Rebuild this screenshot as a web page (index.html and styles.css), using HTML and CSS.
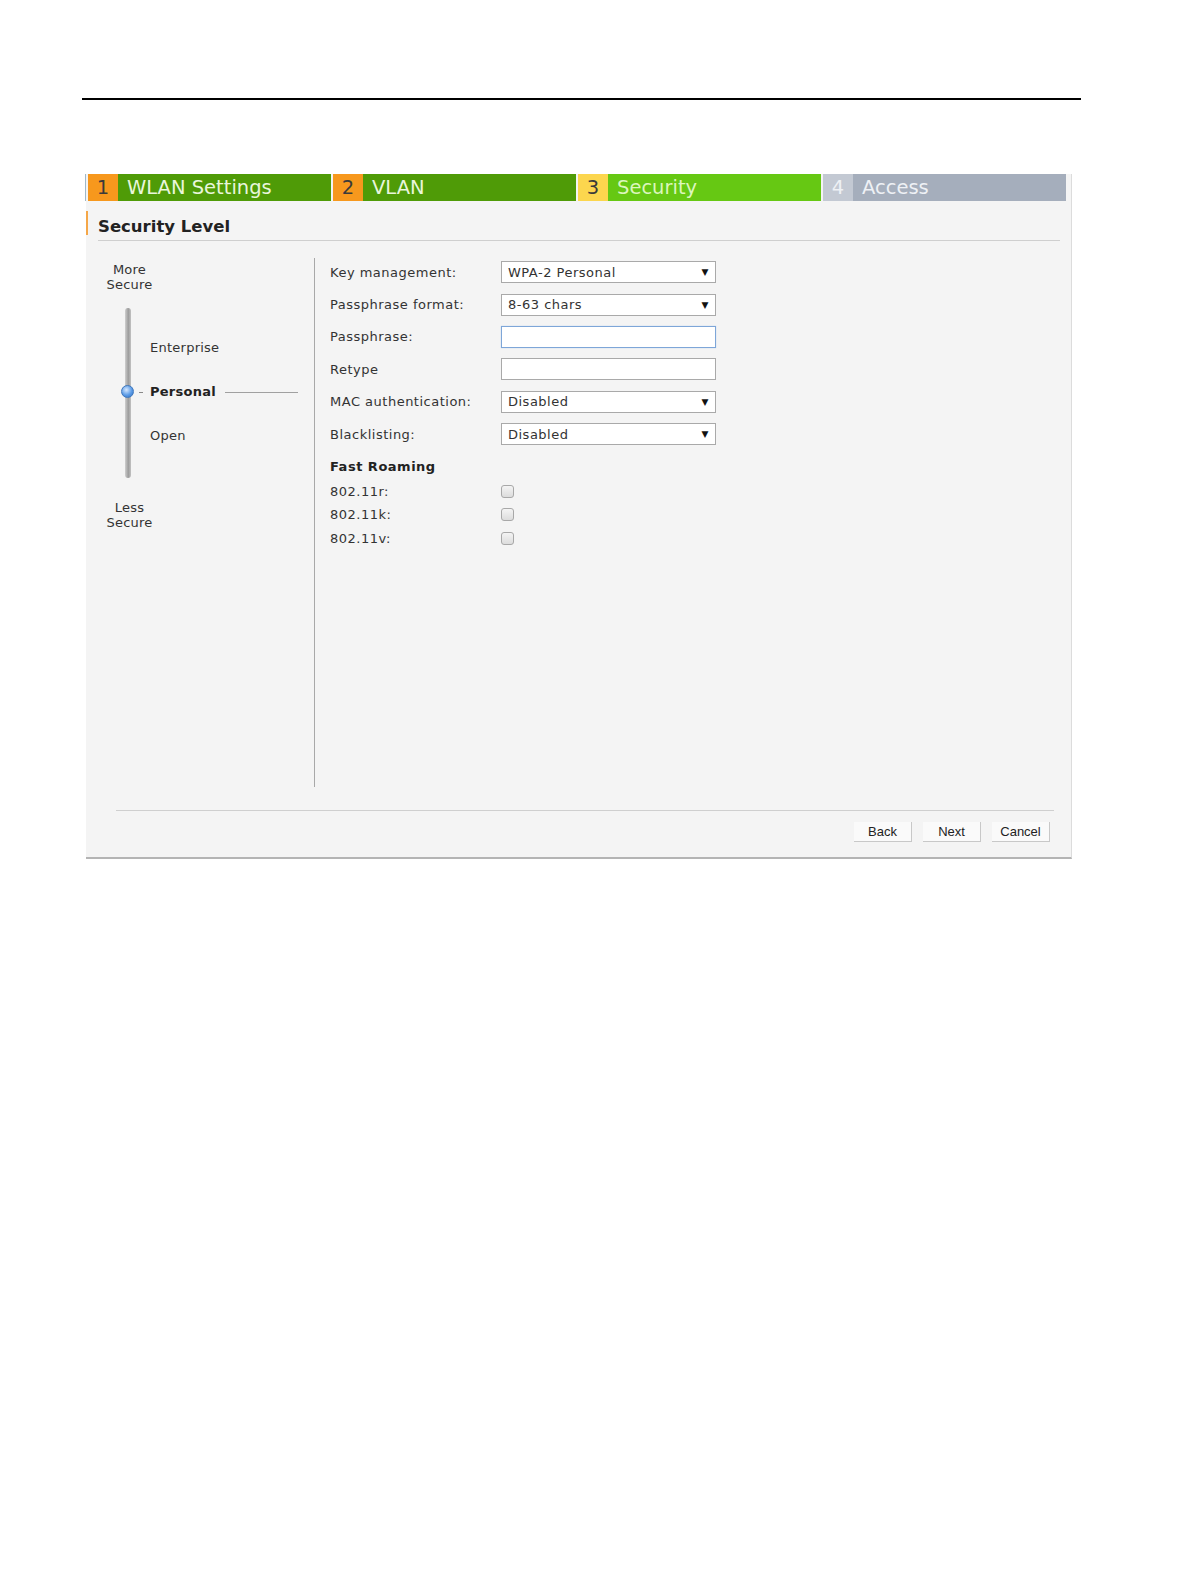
FILE: index.html
```html
<!DOCTYPE html>
<html lang="en">
<head>
    <meta charset="UTF-8">
    <title>New WLAN - Security</title>
    <link rel="stylesheet" href="styles.css">
</head>
<body>
    <div class="top-rule"></div>

    <div class="wizard">
        <!-- wizard steps -->
        <div class="steps">
            <div class="step done"><span class="num">1</span><span class="name">WLAN Settings</span></div>
            <div class="step done"><span class="num">2</span><span class="name">VLAN</span></div>
            <div class="step current"><span class="num">3</span><span class="name">Security</span></div>
            <div class="step todo"><span class="num">4</span><span class="name">Access</span></div>
        </div>

        <div class="section-head">
            <span class="mark"></span>
            <h2>Security Level</h2>
        </div>

        <div class="content">
            <div class="level">
                <div class="level-end">More<br>Secure</div>
                <div class="slider">
                    <div class="track"><span class="knob"></span></div>
                    <ul class="levels">
                        <li>Enterprise</li>
                        <li class="active"><span>Personal</span><span class="pointer"></span></li>
                        <li>Open</li>
                    </ul>
                </div>
                <div class="level-end less">Less<br>Secure</div>
            </div>

            <div class="form">
                <div class="field">
                    <label>Key management:</label>
                    <div class="select"><span>WPA-2 Personal</span><span class="arrow">&#9660;</span></div>
                </div>
                <div class="field">
                    <label>Passphrase format:</label>
                    <div class="select"><span>8-63 chars</span><span class="arrow">&#9660;</span></div>
                </div>
                <div class="field">
                    <label>Passphrase:</label>
                    <div class="input focused"></div>
                </div>
                <div class="field">
                    <label>Retype</label>
                    <div class="input"></div>
                </div>
                <div class="field">
                    <label>MAC authentication:</label>
                    <div class="select"><span>Disabled</span><span class="arrow">&#9660;</span></div>
                </div>
                <div class="field">
                    <label>Blacklisting:</label>
                    <div class="select"><span>Disabled</span><span class="arrow">&#9660;</span></div>
                </div>

                <div class="group-title">Fast Roaming</div>
                <div class="check-row"><label>802.11r:</label><span class="box"></span></div>
                <div class="check-row"><label>802.11k:</label><span class="box"></span></div>
                <div class="check-row"><label>802.11v:</label><span class="box"></span></div>
            </div>
        </div>

        <div class="footer">
            <button class="btn">Back</button>
            <button class="btn">Next</button>
            <button class="btn">Cancel</button>
        </div>
    </div>
</body>
</html>
```

FILE: styles.css
```css
body {
    margin: 0;
    padding-top: 98px;
    background: #ffffff;
    font-family: "DejaVu Sans", Verdana, sans-serif;
    color: #333;
}

.top-rule {
    margin-left: 82px;
    width: 999px;
    height: 2px;
    background: #000;
}

.wizard {
    margin: 74px 0 0 86px;
    width: 985px;
    background: #f4f4f4;
    border-right: 1px solid #dcdcdc;
    border-bottom: 2px solid #b4b4b4;
}

/* steps */
.steps {
    display: flex;
    gap: 2px;
    height: 27px;
    padding-left: 2px;
    border-left: 1px solid #9fb8c8;
    margin-left: -1px;
}

.step {
    display: flex;
    width: 243px;
    font-size: 19.5px;
    line-height: 28px;
}

.step .num {
    width: 30px;
    text-align: center;
    color: #3a3a3a;
}

.step .name {
    flex: 1;
    padding-left: 9px;
}

.step.done .num {
    background: #f7981d;
}

.step.done .name {
    background: #4f9b07;
    color: #e9f6dc;
}

.step.current .num {
    background: #fcd64e;
}

.step.current .name {
    background: #66c813;
    color: #dcf6bd;
}

.step.todo .num {
    background: #c3c9d3;
    color: #eef1f5;
}

.step.todo .name {
    background: #a5aebc;
    color: #eef1f5;
}

/* heading */
.section-head {
    display: flex;
    height: 40px;
}

.section-head .mark {
    align-self: center;
    width: 2px;
    height: 24px;
    margin: 4px 10px 0 0;
    background: #f5a748;
}

.section-head h2 {
    flex: 1;
    margin: 0 11px 0 0;
    box-sizing: border-box;
    height: 40px;
    padding-top: 13px;
    line-height: 26px;
    font-size: 16.5px;
    font-weight: bold;
    color: #222;
    border-bottom: 1px solid #cfcfcf;
}

.content {
    display: flex;
    align-items: flex-start;
    padding-top: 15px;
}

/* security level slider */
.level {
    width: 228px;
    height: 529px;
    margin-top: 2px;
    border-right: 1px solid #a8a8a8;
    font-size: 13px;
    letter-spacing: 0.25px;
}

.level-end {
    width: 87px;
    margin-top: 4px;
    text-align: center;
    line-height: 15px;
}

.level-end.less {
    margin-top: 22px;
}

.slider {
    display: flex;
    height: 170px;
    margin-top: 16px;
}

.track {
    position: relative;
    width: 6px;
    margin-left: 39px;
    border-radius: 3px;
    background: linear-gradient(to right, #cfcfcf, #9c9c9c 55%, #c2c2c2);
}

.knob {
    position: absolute;
    left: -4px;
    top: 77px;
    width: 13px;
    height: 13px;
    box-sizing: border-box;
    border-radius: 50%;
    border: 1px solid #3e77bd;
    background: radial-gradient(circle at 40% 35%, #d6e8ff, #5b9be6 55%, #2f6fc2);
}

.levels {
    flex: 1;
    list-style: none;
    margin: 0 0 0 19px;
    padding: 18px 0 0;
}

.levels li {
    line-height: 44px;
}

.levels li.active {
    position: relative;
    display: flex;
    align-items: center;
    font-weight: bold;
    color: #222;
}

.levels li.active::before {
    content: "";
    position: absolute;
    left: -11px;
    top: 22px;
    width: 4px;
    height: 1px;
    background: #888;
}

.levels .pointer {
    flex: 1;
    height: 1px;
    margin: 0 16px 0 9px;
    background: #a0a0a0;
}

/* form */
.form {
    flex: 1;
    padding-left: 15px;
    font-size: 13px;
    letter-spacing: 0.5px;
}

.field {
    display: flex;
    align-items: center;
    height: 32.4px;
}

.field label,
.check-row label {
    width: 171px;
}

.select,
.input {
    box-sizing: border-box;
    width: 215px;
    height: 22px;
    background: #fff;
    border: 1px solid #a9a9a9;
}

.select {
    display: flex;
    justify-content: space-between;
    align-items: center;
    padding: 0 6px;
    color: #333;
}

.select .arrow {
    font-size: 9px;
    color: #111;
}

.input.focused {
    border: 1px solid #7ea6d8;
    box-shadow: 0 0 1px #a9c6ea;
}

.group-title {
    margin-top: 5px;
    line-height: 24px;
    font-weight: bold;
    color: #222;
}

.check-row {
    display: flex;
    align-items: center;
    height: 23.6px;
}

.check-row .box {
    width: 13px;
    height: 13px;
    box-sizing: border-box;
    border: 1px solid #a8a8a8;
    border-radius: 3px;
    background: linear-gradient(#f4f4f4, #dcdcdc);
}

/* footer buttons */
.footer {
    display: flex;
    justify-content: flex-end;
    gap: 11px;
    margin: 23px 17px 0 30px;
    padding: 11px 4px 15px 0;
    border-top: 1px solid #cfcfcf;
}

.btn {
    width: 58px;
    height: 20px;
    padding: 0;
    font-family: "Liberation Sans", Arial, sans-serif;
    font-size: 13px;
    color: #222;
    background: #fafafa;
    border: none;
    border-right: 1px solid #c8c8c8;
    border-bottom: 1px solid #c8c8c8;
}
```
